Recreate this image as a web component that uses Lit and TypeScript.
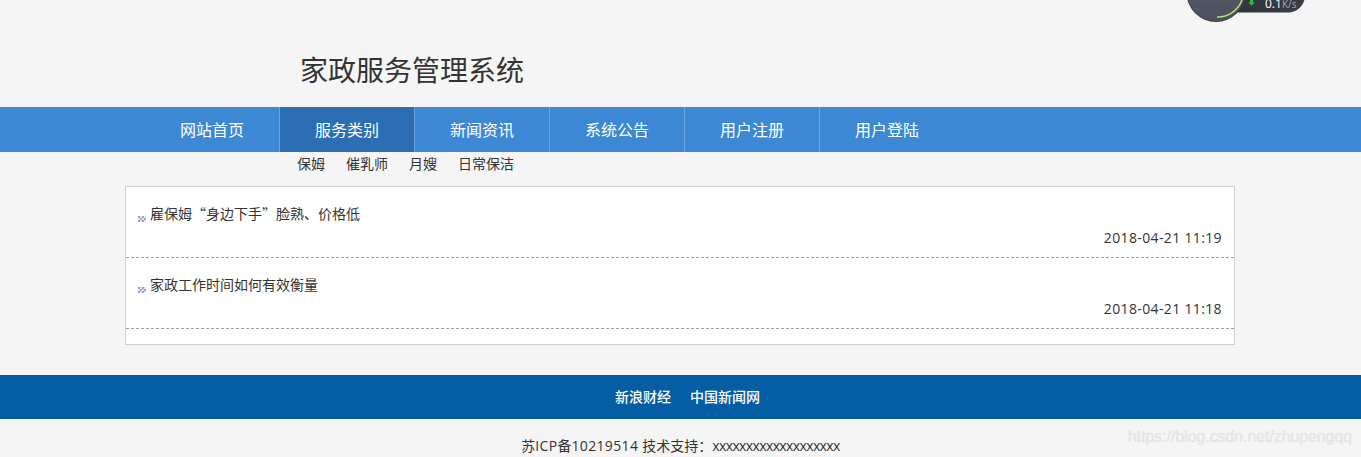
import { LitElement, html, css } from "lit";
import { customElement } from "lit/decorators.js";

@customElement("app-root")
export class AppRoot extends LitElement {
  static styles = css`
    :host { display: block; position: relative; height: 457px; overflow: hidden; background: #f5f5f5; color: #333; font-family: "Noto Sans CJK SC", "Open Sans", sans-serif; font-size: 14px; }
    .head { height: 107px; box-sizing: border-box; padding: 48px 0 0 300px; }
    .title { font-size: 28px; line-height: 42px; color: #333; }
    .nav { height: 45px; background: #3c88d4; display: flex; padding-left: 145px; }
    .nav a { width: 135px; box-sizing: border-box; text-align: center; line-height: 45px; font-size: 16px; color: #fff; border-left: 1px solid #6aa3dd; }
    .nav a:first-child { border-left: 0; width: 134px; }
    .nav a.on { background: #2b6eb3; }
    .sub { height: 34px; display: flex; gap: 21px; padding-left: 297px; line-height: 22px; font-size: 14px; }
    .card { margin-left: 125px; width: 1110px; height: 159px; box-sizing: border-box; border: 1px solid #cdd2d8; background: #fff; }
    .row { height: 71px; box-sizing: border-box; border-bottom: 1px dashed #a0a0a0; padding: 15px 12px 0 11px; }
    .t { display: flex; align-items: center; line-height: 22px; font-size: 14px; gap: 4px; color: #333; }
    .b { width: 8px; height: 6px; margin: 11px 0 0 1px; flex: none; }
    .d { text-align: right; line-height: 22px; font-size: 14px; margin-top: 3px; font-family: "Open Sans", sans-serif; letter-spacing: 0.36px; }
    .foot { margin-top: 30px; height: 44px; background: #055ea3; display: flex; justify-content: center; gap: 19px; padding-left: 14px; line-height: 42px; color: #fff; font-size: 14px; font-weight: 500; }
    .cp { text-align: center; line-height: 22px; margin-top: 15px; }
    .num { font-family: "Open Sans", sans-serif; letter-spacing: 0.35px; }
    .xs { font-family: "Open Sans", sans-serif; letter-spacing: -0.62px; }
    .mark { position: absolute; left: 1128px; top: 428px; font-family: "Liberation Sans", sans-serif; font-size: 15.8px; color: #e6e6e6; text-shadow: 0 0 1px #ddd; white-space: nowrap; }
    .w { position: absolute; left: 1180px; top: 0; width: 130px; height: 30px; }
    .w text { font-family: "Open Sans", sans-serif; font-size: 12px; }
  `;
  render() {
    const dot = html`<svg class="b" viewBox="0 0 8 6"><rect width="8" height="6" fill="#e6e3f3"/><path fill="#a49bd0" d="M0 0h2v2H0zM4 0h2v2H4zM2 2h2v2H2zM6 2h2v2H6zM0 4h2v2H0zM4 4h2v2H4z"/></svg>`;
    const news = [["雇保姆“身边下手”脸熟、价格低", "2018-04-21 11:19"], ["家政工作时间如何有效衡量", "2018-04-21 11:18"]];
    return html`
      <div class="head"><div class="title">家政服务管理系统</div></div>
      <nav class="nav">
        <a>网站首页</a><a class="on">服务类别</a><a>新闻资讯</a><a>系统公告</a><a>用户注册</a><a>用户登陆</a>
      </nav>
      <div class="sub"><span>保姆</span><span>催乳师</span><span>月嫂</span><span>日常保洁</span></div>
      <div class="card">
        ${news.map(([t, d]) => html`<div class="row"><div class="t">${dot}<span>${t}</span></div><div class="d">${d}</div></div>`)}
      </div>
      <div class="foot"><span>新浪财经</span><span>中国新闻网</span></div>
      <div class="cp">苏<span class="num">ICP</span>备<span class="num">10219514 </span>技术支持：<span class="xs">xxxxxxxxxxxxxxxxxxx</span></div>
      <div class="mark">https://blog.csdn.net/zhupengqq</div>
      <svg class="w" viewBox="0 0 130 30">
        <defs>
          <linearGradient id="c" x1="0" y1="0" x2="0" y2="1"><stop offset="0" stop-color="#5d606e"/><stop offset="1" stop-color="#4c4f5d"/></linearGradient>
          <linearGradient id="p" x1="0" y1="0" x2="1" y2="0"><stop offset="0" stop-color="#2c2f37"/><stop offset="1" stop-color="#3a3d46"/></linearGradient>
        </defs>
        <rect x="20" y="-30" width="105" height="42.5" rx="17" fill="url(#p)"/>
        <circle cx="36" cy="-7.5" r="29.5" fill="#3a3c47"/>
        <circle cx="36" cy="-7.5" r="28.500" fill="url(#c)"/>
        <path d="M62 0 A26 26 0 0 1 37 17" fill="none" stroke="#b5e26a" stroke-width="1.5"/>
        <path d="M70 0 h3 v2.500 h2 l-3.500 3 L68 2.500 h2z" fill="#35b44a"/>
        <text x="85" y="7.500" fill="#fff">0.1<tspan fill="#aaa" font-size="10">K/s</tspan></text>
      </svg>
    `;
  }
}
